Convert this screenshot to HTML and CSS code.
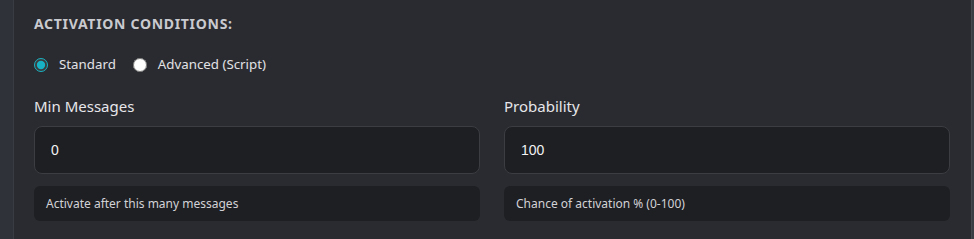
FILE: index.html
```html
<!DOCTYPE html>
<html lang="en">
<head>
    <meta charset="UTF-8">
    <meta name="viewport" content="width=device-width, initial-scale=1.0">
    <title>Activation Conditions</title>
    <link rel="stylesheet" href="styles.css">
</head>
<body>
    <div class="layout">
        <div class="side-strip"></div>
        <div class="panel">
            <h3 class="section-title">Activation Conditions:</h3>

            <div class="radio-row">
                <label class="radio"><input type="radio" name="mode" value="standard" checked> Standard</label>
                <label class="radio"><input type="radio" name="mode" value="advanced"> Advanced (Script)</label>
            </div>

            <div class="field-grid">
                <div class="field">
                    <label for="minMessages">Min Messages</label>
                    <input type="text" id="minMessages" value="0">
                    <div class="hint">Activate after this many messages</div>
                </div>
                <div class="field">
                    <label for="probability">Probability</label>
                    <input type="text" id="probability" value="100">
                    <div class="hint">Chance of activation % (0-100)</div>
                </div>
            </div>
        </div>
        <div class="scroll-edge"></div>
    </div>
</body>
</html>
```

FILE: styles.css
```css
body {
    margin: 0;
    background-color: #2a2b30;
    font-family: 'Noto Sans', 'Open Sans', sans-serif;
    color: #e2e2e6;
}

.layout {
    display: flex;
    height: 239px;
    overflow: hidden;
}

.side-strip {
    width: 13px;
    background-color: #303239;
    border-right: 1px solid #3a3c43;
}

.panel {
    flex: 1;
    padding: 14px 21px 0 20px;
}

.scroll-edge {
    width: 2px;
    background-color: #3a3c43;
    border-left: 1px solid #45474e;
}

.section-title {
    margin: 0;
    font-size: 14px;
    line-height: 19px;
    font-weight: 700;
    text-transform: uppercase;
    letter-spacing: 0.7px;
    color: #c9cacf;
}

.radio-row {
    display: flex;
    gap: 17px;
    margin-top: 22px;
    font-size: 13.3px;
    line-height: 19px;
}

.radio {
    display: flex;
    align-items: center;
    gap: 11px;
    color: #e2e2e6;
}

.radio input {
    margin: 0;
    width: 14px;
    height: 14px;
    accent-color: #17b3c4;
}

.field-grid {
    display: grid;
    grid-template-columns: 1fr 1fr;
    gap: 24px;
    margin-top: 22px;
}

.field {
    display: flex;
    flex-direction: column;
}

.field label {
    font-size: 15px;
    line-height: 20px;
    color: #e6e6ea;
    margin-bottom: 10px;
}

.field input {
    box-sizing: border-box;
    height: 48px;
    padding: 0 16px;
    background-color: #1e1f23;
    border: 1px solid #3c3d43;
    border-radius: 8px;
    color: #f2f2f4;
    font-family: 'Liberation Sans', sans-serif;
    font-size: 14px;
}

.field input:focus {
    outline: 0;
    border-color: #17b3c4;
}

.hint {
    box-sizing: border-box;
    height: 35px;
    margin-top: 12px;
    padding: 8px 12px;
    background-color: #1e1f23;
    border-radius: 6px;
    font-size: 12px;
    line-height: 19px;
    color: #d2d2d6;
}
```
